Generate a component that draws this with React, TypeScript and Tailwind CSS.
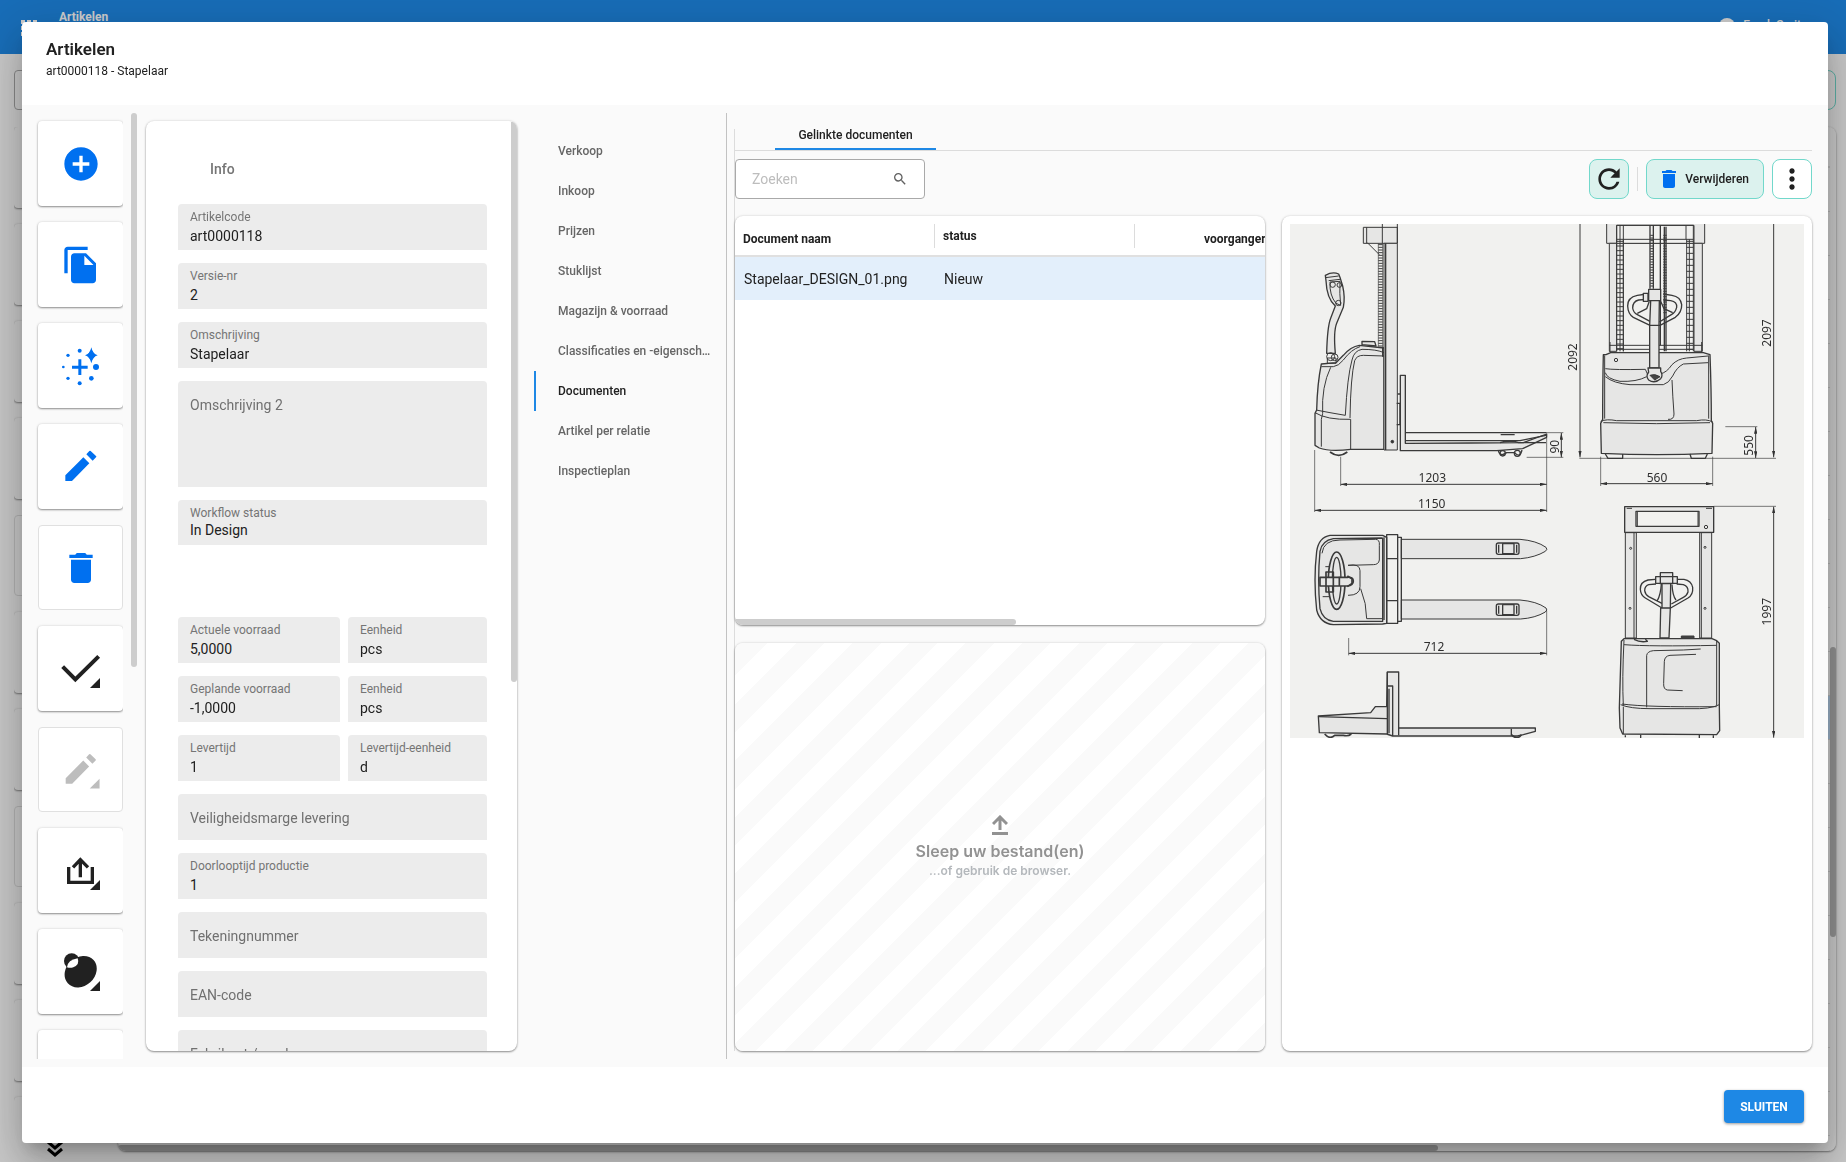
import { useState } from "react";
import type { ReactNode } from "react";
import { MdAddCircle, MdDelete, MdFileCopy, MdMoreVert, MdRefresh, MdSearch } from "react-icons/md";

const tabs = [
  "Verkoop",
  "Inkoop",
  "Prijzen",
  "Stuklijst",
  "Magazijn & voorraad",
  "Classificaties en -eigensch…",
  "Documenten",
  "Artikel per relatie",
  "Inspectieplan",
];

const cardShadow = "shadow-[0_1px_2px_rgba(0,0,0,0.4),0_0_3px_rgba(0,0,0,0.12)]";

function Glyph({ className, children }: { className: string; children: ReactNode }) {
  return (
    <svg viewBox="0 0 255 255" className={`size-full ${className}`} fill="currentColor" aria-hidden="true">
      {children}
    </svg>
  );
}

// Small triangle that marks a button with a submenu
const Corner = () => <path d="M186 156V186H156Z" />;

const Pencil = () => (
  <path d="M82 154V171H102L154 118L136 100ZM145 91L154 81Q156 79 158 81L174 96Q176 98 174 100L164 110Z" />
);

const actions = [
  { label: "Nieuw", icon: <MdAddCircle className="size-10 text-[#0070f0]" /> },
  { label: "Kopiëren", icon: <MdFileCopy className="size-10 text-[#0070f0]" /> },
  {
    label: "Genereren",
    icon: (
      <Glyph className="text-[#0070f0]">
        <path d="M121 109h9v19h19v9h-19v19h-9v-19h-19v-9h19Z" />
        <path d="M160 73Q164 93 179 97Q164 101 160 121Q156 101 141 97Q156 93 160 73Z" />
        <path d="M160 80L167 90L173 97L167 104L160 114L153 104L147 97L153 90Z" />
        <circle cx="125" cy="83" r="6" />
        <circle cx="90" cy="97" r="5" />
        <circle cx="76" cy="132" r="4" />
        <circle cx="90" cy="166" r="5" />
        <circle cx="125" cy="181" r="6" />
        <circle cx="160" cy="166" r="7" />
        <circle cx="174" cy="132" r="9" />
      </Glyph>
    ),
  },
  {
    label: "Bewerken",
    icon: (
      <Glyph className="text-[#0070f0]">
        <Pencil />
      </Glyph>
    ),
  },
  { label: "Verwijderen", flat: true, icon: <MdDelete className="size-10 text-[#0070f0]" /> },
  {
    label: "Goedkeuren",
    icon: (
      <Glyph className="text-[#212121]">
        <path d="M74 122L112 160L182 91" fill="none" stroke="currentColor" strokeWidth="12" />
        <Corner />
      </Glyph>
    ),
  },
  {
    label: "Wijzigen",
    flat: true,
    icon: (
      <Glyph className="text-[#bdbdbd]">
        <Pencil />
        <Corner />
      </Glyph>
    ),
  },
  {
    label: "Exporteren",
    icon: (
      <Glyph className="text-[#212121]">
        <path
          d="M92 117V163H163V117M127 148V95M105 118L127 95L150 118"
          fill="none"
          stroke="currentColor"
          strokeWidth="10"
        />
        <Corner />
      </Glyph>
    ),
  },
  {
    label: "Relaties",
    icon: (
      <Glyph className="text-[#212121]">
        <circle cx="101" cy="96" r="23" />
        <ellipse cx="128" cy="128" rx="52" ry="43" transform="rotate(-42 128 128)" />
        <path d="M87 115Q89 93 119 88Q126 107 106 115Q96 118 87 115Z" fill="#fff" />
        <Corner />
      </Glyph>
    ),
  },
  { label: "Meer", icon: null },
];

type FieldProps = { label: string; value?: string };

function Field({ label, value }: FieldProps) {
  const id = `veld-${label.toLowerCase().replace(/\W+/g, "-")}`;

  if (value === undefined) {
    return (
      <input
        aria-label={label}
        placeholder={label}
        className="block h-[46px] w-full rounded-t bg-[#ececec] px-3 pt-0.5 text-sm text-[#212121] outline-none placeholder:text-[#707070]"
      />
    );
  }

  return (
    <div className="flex h-[46px] flex-col rounded-t bg-[#ececec] px-3 pt-1">
      <label htmlFor={id} className="text-xs leading-[18px] text-[#757575]">
        {label}
      </label>
      <input
        id={id}
        defaultValue={value}
        className="h-5 w-full bg-transparent text-sm leading-5 text-[#212121] outline-none"
      />
    </div>
  );
}

function FieldPair({ left, right }: { left: FieldProps; right: FieldProps }) {
  return (
    <div className="grid grid-cols-[162fr_139fr] gap-2">
      <Field {...left} />
      <Field {...right} />
    </div>
  );
}

function InfoPanel() {
  return (
    <section className={`relative w-[371px] shrink-0 overflow-hidden rounded-lg bg-white ${cardShadow}`}>
      <div className="flex flex-col gap-[13px] pr-[30px] pl-8">
        <h2 className="pt-[38px] pb-3 pl-8 text-sm leading-5 font-medium text-[#757575]">Info</h2>
        <Field label="Artikelcode" value="art0000118" />
        <Field label="Versie-nr" value="2" />
        <Field label="Omschrijving" value="Stapelaar" />
        <textarea
          aria-label="Omschrijving 2"
          placeholder="Omschrijving 2"
          className="block h-[106px] w-full resize-none rounded-t bg-[#ececec] px-3 pt-[14px] text-sm text-[#212121] outline-none placeholder:text-[#707070]"
        />
        <div className="mb-[59px] flex h-[45px] flex-col rounded-t bg-[#ececec] px-3 pt-1">
          <label htmlFor="workflow" className="text-xs leading-[18px] text-[#757575]">
            Workflow status
          </label>
          <select
            id="workflow"
            className="h-4 appearance-none bg-transparent text-sm leading-4 text-[#212121] outline-none"
          >
            <option>In Design</option>
          </select>
        </div>
        <FieldPair left={{ label: "Actuele voorraad", value: "5,0000" }} right={{ label: "Eenheid", value: "pcs" }} />
        <FieldPair left={{ label: "Geplande voorraad", value: "-1,0000" }} right={{ label: "Eenheid", value: "pcs" }} />
        <FieldPair left={{ label: "Levertijd", value: "1" }} right={{ label: "Levertijd-eenheid", value: "d" }} />
        <Field label="Veiligheidsmarge levering" />
        <Field label="Doorlooptijd productie" value="1" />
        <Field label="Tekeningnummer" />
        <Field label="EAN-code" />
        <Field label="Fabrikant / merk" />
      </div>
      <div className="absolute top-px right-0 h-[560px] w-1.5 rounded-b-full bg-[#cdcdcd]" />
    </section>
  );
}

function DocumentTable() {
  return (
    <section className={`relative overflow-hidden rounded-lg bg-white ${cardShadow}`}>
      <table className="w-[730px] table-fixed text-left">
        <thead>
          <tr className="h-10 border-b-2 border-[#e0e0e0] text-xs leading-[18px] text-[#212121]">
            <th className="w-[200px] font-bold">
              <div className="flex h-6 items-end border-r border-[#dcdcdc] pl-2">Document naam</div>
            </th>
            <th className="w-[200px] font-bold">
              <div className="flex h-6 items-center border-r border-[#dcdcdc] pl-2">status</div>
            </th>
            <th className="font-bold">
              <div className="flex h-6 items-end pl-[69px]">voorganger</div>
            </th>
          </tr>
        </thead>
        <tbody>
          <tr className="h-11 bg-[#e3effb] text-sm text-[#212121]">
            <td className="pl-[9px]">Stapelaar_DESIGN_01.png</td>
            <td className="pl-[9px]">Nieuw</td>
            <td />
          </tr>
        </tbody>
      </table>
      <div className="absolute bottom-0 left-0 h-1.5 w-[281px] rounded-r-full bg-[#cdcdcd]" />
    </section>
  );
}

function DropZone() {
  return (
    <button
      type="button"
      className={`flex flex-col items-center justify-center rounded-lg bg-[repeating-linear-gradient(-45deg,#fafafa_0_20px,#fff_20px_40px)] font-[Inter,sans-serif] ${cardShadow}`}
    >
      <svg viewBox="0 0 16 20" className="mb-1 h-5 w-4" fill="none" stroke="#929292" strokeWidth="3" aria-hidden="true">
        <path d="M1 9L8 2L15 9M8 3V15M0 18.500H16" />
      </svg>
      <span className="text-base leading-6 font-semibold text-[#929292]">Sleep uw bestand(en)</span>
      <span className="text-xs leading-4 font-semibold text-[#b4b8bc]">...of gebruik de browser.</span>
    </button>
  );
}

function Dim({ d }: { d: string }) {
  return <path d={d} markerStart="url(#arrow)" markerEnd="url(#arrow)" strokeWidth="3" />;
}

function Rungs({ x, width, from, to, step }: { x: number; width: number; from: number; to: number; step: number }) {
  let d = "";
  for (let y = from; y < to; y += step) d += `M${x} ${y}h${width}`;
  return <path d={d} strokeWidth="3" />;
}

const body = "#e6e6e5";

function SideView() {
  return (
    <g transform="translate(-30 -42)">
      <path d="M250 52H352V100H250ZM260 52V100M262 98L298 134" fill={body} />
      <path d="M295 100V410M308 100V412" strokeWidth="2" />
      <Rungs x={295} width={13} from={104} to={410} step={8} />
      <path d="M307 42V100M352 42V100" />
      <path d="M140 430Q142 350 152 325L166 288Q140 265 138 212L136 196Q158 184 176 192L181 205L188 228Q196 262 190 292L170 340Q160 365 166 430Z" fill={body} strokeWidth="4" />
      <path d="M146 212L180 208M136 203L176 198M150 216Q148 256 168 280L182 286Q178 250 180 214Z" />
      <circle cx="158" cy="224" r="8" />
      <circle cx="178" cy="225" r="7" />
      <circle cx="175" cy="279" r="8" />
      <path d="M124 462L168 458Q176 450 190 436Q212 410 238 406L312 414V718H212Q150 726 118 714L105 706V610L110 600Q112 520 124 462Z" fill={body} strokeWidth="4" />
      <path d="M124 470H160Q176 468 190 450Q214 418 240 410M105 608Q140 630 212 628V718M108 600L150 608L196 616Q202 500 216 450Q222 422 246 418Q290 418 312 428M210 624Q212 500 224 452Q230 436 250 436L312 438M152 472Q124 530 128 610L124 628V710" />
      <path d="M246 404V394L284 395L288 408Z" fill={body} strokeWidth="4" />
      <circle cx="152" cy="440" r="12" />
      <circle cx="164" cy="442" r="10" />
      <path d="M142 444H168V460H142Z" />
      <path d="M150 726Q176 746 202 726" strokeWidth="5" />
      <path d="M312 100H352V720H312Z" fill={body} />
      <path d="M317 100V720M308 412V440M350 580H360V644H350M353 552H361" strokeWidth="4" />
      <circle cx="337" cy="695" r="4" fill="#333" />
      <path d="M361 496H376V700L730 698L800 672V682L728 716L650 722H361Z" fill={body} strokeWidth="4" />
      <path d="M376 668H800M376 692H720L798 676M662 674H704M660 698Q690 690 716 698L798 698" strokeWidth="4" />
      <circle cx="668" cy="730" r="8" strokeWidth="4" />
      <circle cx="712" cy="730" r="9" strokeWidth="4" />
      <path d="M655 722Q660 742 680 728H704Q720 746 726 720" strokeWidth="4" />
      <path d="M104 720V906M182 740V828M800 684V906M800 668H850M740 742H850" strokeWidth="2" />
      <Dim d="M182 823H800" />
      <Dim d="M104 901H800" />
      <Dim d="M844 669V742" />
    </g>
  );
}

function FrontView() {
  return (
    <g transform="translate(780 -42)">
      <path d="M170 42V100H464V42" fill={body} />
      <path d="M178 100H200V424H178ZM432 100H457V424H432Z" fill={body} />
      <path d="M200 46H432V100H200Z" fill="#f1f1ef" />
      <path d="M200 46H430V424M200 46V424M210 46V424M220 46V424M408 46V88M410 88V424M418 88V424M200 88H430M220 88V424" />
      <path d="M300 46V236M310 46V236M331 46V406M343 50V424M348 50V424" strokeWidth="4" />
      <Rungs x={200} width={20} from={94} to={424} step={14} />
      <Rungs x={410} width={20} from={94} to={424} step={18} />
      <Rungs x={301} width={10} from={76} to={236} step={8} />
      <Rungs x={340} width={10} from={76} to={310} step={8} />
      <path d="M178 406H457M180 396V426M455 396V426M200 418H430" />
      <path d="M290 252L262 256Q232 262 233 288Q234 312 250 322L300 346H330L376 322Q396 306 395 284Q392 260 366 256L340 252M290 268L266 270Q248 274 248 294Q250 308 262 314L300 334M340 270L362 272Q382 276 380 292Q376 308 364 314L328 336M262 310L290 296L298 274M368 308L342 296L332 274" strokeWidth="4" />
      <path d="M168 434L182 428H460L480 434Q484 540 484 632L488 640L486 730Q320 738 154 730L152 640L158 628Q158 520 160 434Z" fill={body} strokeWidth="4" />
      <path d="M152 634Q170 626 200 632H440Q470 626 488 636M160 638Q320 644 480 638M164 436V626M476 436V626M166 476Q190 480 286 478L296 500M166 488Q170 506 210 514Q260 516 290 500M166 500Q190 520 240 524H340Q356 520 368 498Q380 472 400 462L474 458M330 492Q350 488 366 464Q384 446 410 444L474 438M366 510Q368 560 372 612Q372 630 354 628" />
      <circle cx="198" cy="450" r="5" />
      <path d="M299 346H327V474H299ZM296 238H332V272H296ZM280 250H294V274H280Z" fill={body} strokeWidth="4" />
      <path d="M302 272L299 346H327L328 272Z" fill={body} strokeWidth="4" />
      <path d="M294 474H332V484Q340 496 332 506Q314 522 296 510Q286 500 296 486Z" fill={body} strokeWidth="4" />
      <path d="M300 496Q314 490 330 500L314 510Z" fill="#444" />
      <path d="M166 732L174 745H218V732M420 732L424 745H466L472 732" strokeWidth="4" />
      <path d="M88 745H678M152 740V828M488 740V828M526 650H622" strokeWidth="2" />
      <path d="M90 42V742" markerEnd="url(#arrow)" />
      <path d="M671 42V742" markerEnd="url(#arrow)" />
      <Dim d="M617 651V744" />
      <Dim d="M152 821H488" />
    </g>
  );
}

function TopView() {
  return (
    <g transform="translate(-30 768)">
      <path d="M364 178H720Q770 182 798 202Q804 208 796 214Q766 232 722 236H364Z" fill={body} />
      <path d="M364 360H720Q770 364 798 384Q804 390 796 396Q766 414 722 417H364Z" fill={body} />
      <path d="M150 166H308L320 172V430L308 432L160 434Q120 430 110 390Q100 300 110 214Q116 172 150 166Z" fill={body} strokeWidth="4" />
      <path d="M308 174L160 176Q126 182 120 214Q112 300 120 386Q128 420 160 424H308V174" strokeWidth="4" />
      <path d="M126 220Q130 180 180 180L286 178Q300 178 298 196V240Q296 254 280 254L204 256Q240 250 240 272V320Q240 346 204 346M242 326Q260 370 260 416H306M136 260H150M128 350H150" />
      <path d="M320 164H353V430H320ZM353 172H364V424H353M320 236H353M320 362H353M312 172V420" strokeWidth="4" />
      <ellipse cx="170" cy="302" rx="25" ry="86" strokeWidth="5" />
      <ellipse cx="170" cy="302" rx="13" ry="70" strokeWidth="4" />
      <path d="M120 292H202Q220 290 220 303Q220 316 202 318H120Z" fill={body} strokeWidth="5" />
      <path d="M138 276H160V336H138ZM138 290V318M178 290V318M202 288L216 296V310L202 320" strokeWidth="5" />
      {[206, 389].map((y) => (
        <g key={y} strokeWidth="4">
          <rect x="649" y={y - 17} width="68" height="34" rx="6" />
          <rect x="668" y={y - 15} width="34" height="30" />
          <path d={`M656 ${y - 12}V${y + 12}M710 ${y - 12}V${y + 12}`} />
        </g>
      ))}
      <path d="M206 474V526M800 392V526" strokeWidth="2" />
      <Dim d="M206 520H800" />
      <path d="M322 576H356V744H766V754L730 764L712 768H338L320 762L118 758L115 708L272 698L286 680H320Z" fill={body} strokeWidth="4" />
      <path d="M322 576V762M322 618H338V768M327 626V760M356 744V766M116 710L320 716M694 746V766" strokeWidth="4" />
      <path d="M134 762Q150 780 164 766H190Q204 770 214 762M694 764Q712 782 724 764" strokeWidth="5" />
    </g>
  );
}

function BackView() {
  return (
    <g transform="translate(780 768)">
      <path d="M226 158H259V474H226ZM449 158H485V474H449Z" fill={body} />
      <path d="M252 158V474M454 158V474" />
      <path d="M224 80H491V157H224Z" fill={body} strokeWidth="4" />
      <path d="M258 94H447V139H258Z" fill="#f1f1ef" strokeWidth="4" />
      <path d="M262 94V139M444 94V139M230 85H246M468 85H486" />
      <circle cx="468" cy="141" r="5" />
      <circle cx="242" cy="205" r="3" />
      <circle cx="240" cy="385" r="3" />
      <circle cx="465" cy="202" r="3" />
      <circle cx="465" cy="385" r="3" />
      <path d="M316 298L294 300Q270 306 271 328Q272 346 286 354L336 384H362L414 354Q430 344 428 322Q424 302 402 298L380 298M318 312L296 314Q284 318 284 332Q286 344 296 350L336 370M380 312L400 314Q416 320 414 336Q410 348 400 352L364 372M334 312Q332 344 322 362M366 314Q368 348 378 360" strokeWidth="4" />
      <path d="M317 290H382V310H317ZM331 278H368V311H331ZM336 311H362L361 384H336ZM332 384H361L357 474H330Z" fill={body} strokeWidth="4" />
      <path d="M394 474V468H432V476Z" fill="#444" />
      <path d="M222 476H486L500 482L508 490V680L509 752L500 764L218 762L210 744L208 684L214 484Z" fill={body} strokeWidth="4" />
      <path d="M222 480Q216 600 220 676M500 482V676M222 494Q300 500 500 496M212 674Q240 686 300 686H420Q480 688 508 674M220 680V762M216 672Q290 682 500 680M290 682V526Q292 514 310 512L400 510L452 507M398 632L352 630Q340 628 341 610L343 544Q344 528 360 526L438 523" />
      <path d="M252 478Q270 488 292 484L286 478M226 766V772M272 764V774M448 764V774M490 766V774" strokeWidth="4" />
      <path d="M491 79H678" strokeWidth="2" />
      <Dim d="M671 80V773" />
    </g>
  );
}

function DesignDrawing() {
  return (
    <svg viewBox="0 0 1542 1542" className="block w-full bg-[#f1f1ef]" role="img" aria-label="Stapelaar_DESIGN_01.png">
      <defs>
        <marker id="arrow" viewBox="0 0 20 10" refX="20" refY="5" markerWidth="20" markerHeight="10" markerUnits="userSpaceOnUse" orient="auto-start-reverse">
          <path d="M0 0L20 5L0 10Z" fill="#333" />
        </marker>
      </defs>
      <g fill="none" stroke="#3a3a3a" strokeWidth="3" strokeLinejoin="round">
        <SideView />
        <FrontView />
        <TopView />
        <BackView />
      </g>
      <g fill="#2e2e2e" fontSize="36" fontFamily='"Noto Sans", sans-serif' textAnchor="middle">
        <text x="427" y="773">1203</text>
        <text x="425" y="852">1150</text>
        <text x="432" y="1281">712</text>
        <text x="1101" y="773">560</text>
        <text transform="translate(807 668) rotate(-90)">90</text>
        <text transform="translate(861 399) rotate(-90)">2092</text>
        <text transform="translate(1444 327) rotate(-90)">2097</text>
        <text transform="translate(1388 664) rotate(-90)">550</text>
        <text transform="translate(1444 1163) rotate(-90)">1997</text>
      </g>
    </svg>
  );
}

function Documents() {
  return (
    <div className="mt-4 mb-2 ml-[7px] flex min-w-0 flex-1 flex-col border-l border-[#dcdcdc]">
      <div className="flex h-[22px] border-b border-[#dcdcdc] pl-10" role="tablist">
        <button
          type="button"
          role="tab"
          aria-selected="true"
          className="h-[21px] w-[161px] border-b-2 border-[#1e88e5] pb-[7px] text-xs leading-3 font-medium text-[#212121]"
        >
          Gelinkte documenten
        </button>
      </div>

      <div className="mt-2 flex h-10 items-center">
        <label className="flex h-10 w-[190px] items-center rounded border border-[#a9a9a9] bg-white pr-4 pl-4">
          <input
            aria-label="Zoeken"
            placeholder="Zoeken"
            className="w-full min-w-0 bg-transparent text-sm outline-none placeholder:text-[#bdbdbd]"
          />
          <MdSearch className="size-4 shrink-0 text-[#616161]" />
        </label>
        <div className="flex-1" />
        <button
          type="button"
          aria-label="Vernieuwen"
          className="flex size-10 items-center justify-center rounded-lg border border-[#72d8cb] bg-[#dcf2ee] text-[#212121]"
        >
          <MdRefresh className="size-8" />
        </button>
        <div className="mx-2 h-6 w-px bg-[#dcdcdc]" />
        <button
          type="button"
          className="flex h-10 items-center gap-1 rounded-lg border border-[#72d8cb] bg-[#dcf2ee] pr-[14px] pl-[10px] text-xs font-medium text-[#212121]"
        >
          <MdDelete className="size-6 text-[#0070f0]" />
          Verwijderen
        </button>
        <button
          type="button"
          aria-label="Meer acties"
          className="ml-2 flex size-10 items-center justify-center rounded-lg border border-[#72d8cb] bg-white text-[#212121]"
        >
          <MdMoreVert className="size-8" />
        </button>
      </div>

      <div className="mt-[17px] grid min-h-0 flex-1 grid-cols-2 grid-rows-[410fr_408fr] gap-x-[17px] gap-y-[18px]">
        <DocumentTable />
        <section className={`row-span-2 overflow-hidden rounded-lg bg-white p-2 ${cardShadow}`}>
          <DesignDrawing />
        </section>
        <DropZone />
      </div>
    </div>
  );
}

// The article list that stays visible around the dialog
function PageBehind() {
  return (
    <div className="flex h-full flex-col bg-[#fafafa]" aria-hidden="true" inert>
      <header className="flex h-[54px] shrink-0 items-start bg-[#1e88e5] text-xs font-medium text-white">
        <div className="mt-5 ml-[21px] grid grid-cols-3 gap-0.5">
          {Array.from({ length: 9 }, (_, i) => (
            <span key={i} className="size-1 bg-white" />
          ))}
        </div>
        <span className="mt-[9px] ml-[22px] font-bold">Artikelen</span>
        <span className="mt-[18px] ml-auto size-4 rounded-full bg-white" />
        <span className="mt-[17px] mr-[45px] ml-2">Frank Smit</span>
      </header>
      <div className="mt-4 mr-[10px] ml-[14px] flex h-10 shrink-0 justify-between">
        <div className="w-48 rounded border border-[#a9a9a9]" />
        <div className="w-10 rounded-lg border border-[#72d8cb]" />
      </div>
      <div className="mt-[17px] mr-[10px] mb-1 ml-[14px] flex min-h-0 flex-1 gap-[23px]">
        <div className="flex w-[81px] flex-col gap-4 overflow-hidden">
          {Array.from({ length: 11 }, (_, i) => (
            <div
              key={i}
              className={`flex h-[81px] shrink-0 items-end justify-center rounded ${
                i === 4 || i === 7 ? "border border-[#dcdcdc]" : `bg-[#fafafa] ${cardShadow}`
              }`}
            >
              {i === 10 && (
                <svg viewBox="0 0 16 20" className="mb-[21px] h-5 w-4" fill="none" stroke="#000" strokeWidth="3">
                  <path d="M1 5L8 11L15 5M1 12L8 18L15 12" />
                </svg>
              )}
            </div>
          ))}
        </div>
        <div className={`relative mb-[7px] flex-1 overflow-hidden rounded-lg bg-[#fafafa] ${cardShadow}`}>
          <div className="h-[41px] border-b-2 border-[#e0e0e0]" />
          {Array.from({ length: 22 }, (_, i) => (
            <div key={i} className={`h-11 border-b border-[#dcdcdc] ${i === 12 ? "bg-[#bfdcf7]" : ""}`} />
          ))}
          <div className="absolute inset-y-0 right-0 w-1.5 bg-[#fafafa]">
            <div className="mt-[520px] h-[290px] rounded-full bg-[#b4b4b4]" />
          </div>
          <div className="absolute bottom-0 left-0 h-1.5 w-[1320px] rounded-full bg-[#b4b4b4]" />
        </div>
      </div>
    </div>
  );
}

export default function App() {
  const [active, setActive] = useState("Documenten");

  return (
    <div className="h-screen overflow-hidden font-[Roboto,sans-serif]">
      <PageBehind />

      <div className="fixed inset-0 flex bg-black/20 pt-[22px] pr-[18px] pb-[19px] pl-[22px]">
        <div
          role="dialog"
          aria-labelledby="dialog-title"
          className="flex min-w-0 flex-1 flex-col overflow-hidden rounded bg-white shadow-[0_11px_15px_-7px_rgba(0,0,0,0.2),0_24px_38px_3px_rgba(0,0,0,0.14),0_9px_46px_8px_rgba(0,0,0,0.12)]"
        >
          <header className="h-[83px] shrink-0 px-6 pt-[15px] text-[#212121]">
            <h1 id="dialog-title" className="text-[17px] leading-6 font-semibold">
              Artikelen
            </h1>
            <p className="text-xs leading-5">art0000118 - Stapelaar</p>
          </header>

          <main className="flex min-h-0 flex-1 bg-[#fafafa] py-2 pr-4">
            <div className="flex shrink-0 gap-2 overflow-hidden pl-3">
              <div className="flex flex-col gap-4 overflow-hidden pt-2 pl-1">
                {actions.map((action) => (
                  <button
                    key={action.label}
                    type="button"
                    aria-label={action.label}
                    className={`flex size-[85px] shrink-0 items-center justify-center rounded bg-white ${
                      action.flat ? "border border-[#e0e0e0]" : cardShadow
                    }`}
                  >
                    {action.icon}
                  </button>
                ))}
              </div>
              <div className="h-[554px] w-1.5 rounded-full bg-[#cdcdcd]" />
            </div>

            <div className="my-2 ml-[9px] flex shrink-0">
              <InfoPanel />
            </div>

            <nav className="mt-[18px] ml-[17px] w-[192px] shrink-0">
              {tabs.map((tab) => (
                <button
                  key={tab}
                  type="button"
                  onClick={() => setActive(tab)}
                  className={`block h-10 w-full border-l-2 pl-[22px] text-left text-xs font-medium whitespace-nowrap ${
                    tab === active ? "border-[#1e88e5] text-[#212121]" : "border-transparent text-[#666]"
                  }`}
                >
                  {tab}
                </button>
              ))}
            </nav>

            <div className="w-px shrink-0 bg-[#c2c2c2]" />
            <Documents />
          </main>

          <footer className="flex h-[76px] shrink-0 items-start justify-end pt-[23px] pr-6">
            <button
              type="button"
              className="h-[33px] w-20 rounded bg-[#1e88e5] text-xs font-bold text-white shadow-[0_1px_3px_rgba(0,0,0,0.4)]"
            >
              SLUITEN
            </button>
          </footer>
        </div>
      </div>
    </div>
  );
}
